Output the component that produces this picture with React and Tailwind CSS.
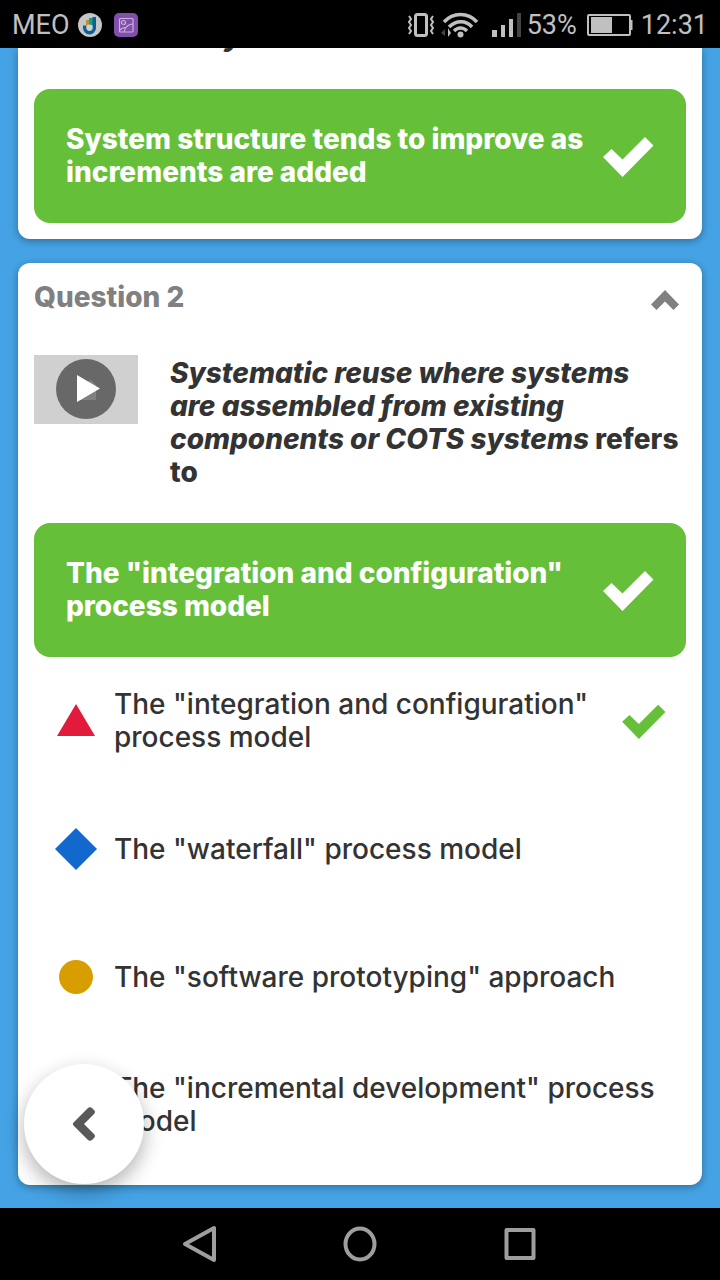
const OPTIONS = [
  { shape: 'triangle', text: 'The "integration and configuration" process model', correct: true },
  { shape: 'diamond', text: 'The "waterfall" process model' },
  { shape: 'circle', text: 'The "software prototyping" approach' },
  { shape: 'square', text: 'The "incremental development" process model' },
];

function Shape({ kind }) {
  return (
    <svg viewBox="0 0 42 42" className="h-[42px] w-[42px] shrink-0" aria-hidden="true">
      {kind === 'triangle' && <path d="M21 4L40 36H2Z" fill="#e21b3c" />}
      {kind === 'diamond' && <path d="M21 0L42 21L21 42L0 21Z" fill="#1368ce" />}
      {kind === 'circle' && <circle cx="21" cy="21" r="17" fill="#d89e00" />}
      {kind === 'square' && <path d="M5 5H37V37H5Z" fill="#66bf39" />}
    </svg>
  );
}

function Check({ className }) {
  return (
    <svg viewBox="0 0 51 42" className={className} fill="currentColor" aria-hidden="true">
      <path d="M0 22L8.500 14L19.500 24.500L42 2L50.500 10.500L19.500 42Z" />
    </svg>
  );
}

function Answer({ children }) {
  return (
    <div className="flex items-center rounded-2xl bg-[#66bf39] py-[34px] pr-8 pl-8 text-white">
      <p className="min-w-0 flex-1 font-extrabold">{children}</p>
      <Check className="h-[42px] w-[51px] shrink-0" />
    </div>
  );
}

function StatusBar() {
  return (
    <header className="flex h-12 items-center justify-between bg-black px-3 pt-0.5 font-[Roboto,sans-serif] text-[27px] leading-8 text-[#c0c0c0]">
      <div className="flex items-center">
        <span>MEO</span>
        <svg viewBox="0 0 24 24" className="ml-2 h-6 w-6" aria-hidden="true">
          <circle cx="12" cy="12" r="12" fill="#c6c6c6" />
          <path d="M8 7H11.500V12H8Z" fill="#b8952c" />
          <path d="M11 5H15V12H11Z" fill="#16a085" />
          <path d="M14.500 4H18V15A6.500 6.500 0 0 1 5 15V12.500H8.500V15A3 3 0 0 0 14.500 15Z" fill="#0a6199" />
          <circle cx="11.500" cy="14.500" r="3" fill="#d0d0d0" />
        </svg>
        <svg viewBox="0 0 24 24" className="ml-3 h-6 w-6" fill="none" stroke="#c8b5d8" strokeWidth="1.200" aria-hidden="true">
          <rect width="24" height="24" rx="5" fill="#824fae" stroke="none" />
          <rect x="5.500" y="5.500" width="13.500" height="13.500" rx="1" />
          <circle cx="9.500" cy="9.500" r="2" />
          <path d="M10 19C11 15 14 11 19 11M6 17C8 15 10 14 12 15" />
        </svg>
      </div>
      <div className="flex items-center">
        <svg viewBox="0 0 28 26" className="h-[26px] w-7" fill="none" stroke="#c0c0c0" aria-hidden="true">
          <rect x="8.500" y="2.500" width="11" height="21" rx="2" strokeWidth="3" />
          <path d="M2 4L4 7L2 10L4 13L2 16L4 19L2 22M26 4L24 7L26 10L24 13L26 16L24 19L26 22" strokeWidth="2" />
        </svg>
        <svg viewBox="0 0 38 26" className="ml-1.5 h-[26px] w-[38px]" fill="none" stroke="#c0c0c0" strokeWidth="3.500" aria-hidden="true">
          <path d="M3 10C12 0 27 0 36 10M8 15C15 8 25 8 31 15M13 19C17 15 22 15 26 19" />
          <circle cx="19.500" cy="22.500" r="3" fill="#c0c0c0" stroke="none" />
          <path d="M0 21L4 17V24Z" fill="#444" stroke="none" />
          <path d="M7 16L10 21L7 25Z" fill="#c0c0c0" stroke="none" />
        </svg>
        <svg viewBox="0 0 30 26" className="ml-3 h-[26px] w-[30px]" aria-hidden="true">
          <path d="M1 18H6V25H1ZM10 13H14V25H10ZM18 7H22V25H18Z" fill="#c0c0c0" />
          <path d="M26 1H30V25H26Z" fill="#444" />
        </svg>
        <span className="ml-1.5">53%</span>
        <svg viewBox="0 0 46 24" className="ml-2.5 h-6 w-[46px]" aria-hidden="true">
          <rect x="1" y="2" width="42" height="20" rx="1" fill="none" stroke="#c0c0c0" strokeWidth="2" />
          <path d="M4 4H25V20H4ZM43 7H45.500V17H43Z" fill="#c0c0c0" />
        </svg>
        <span className="ml-2">12:31</span>
      </div>
    </header>
  );
}

function NavBar() {
  return (
    <nav className="flex h-[72px] items-center justify-center gap-[120px] bg-black text-[#9e9e9e]">
      <button type="button" aria-label="Back" className="h-10 w-10">
        <svg viewBox="0 0 40 40" className="h-10 w-10" fill="none" stroke="currentColor" strokeWidth="4" strokeLinejoin="round">
          <path d="M34 4V36L5 20Z" />
        </svg>
      </button>
      <button type="button" aria-label="Home" className="h-10 w-10">
        <svg viewBox="0 0 40 40" className="h-10 w-10" fill="none" stroke="currentColor" strokeWidth="4">
          <ellipse cx="20" cy="20" rx="14.500" ry="15.500" />
        </svg>
      </button>
      <button type="button" aria-label="Recent apps" className="h-10 w-10">
        <svg viewBox="0 0 40 40" className="h-10 w-10" fill="none" stroke="currentColor" strokeWidth="4" strokeLinejoin="round">
          <path d="M6.500 6H33.500V34H6.500Z" />
        </svg>
      </button>
    </nav>
  );
}

export default function App() {
  return (
    <div className="flex min-h-screen flex-col bg-[#45a3e5]">
      <StatusBar />
      <main className="relative flex flex-1 flex-col gap-6 px-[18px] pb-[23px] font-[Inter,sans-serif] text-[28px] leading-[33px] font-medium text-[#333]">
        <section className="rounded-b-xl bg-white px-4 pb-4 shadow-[0_2px_8px_rgba(0,0,0,0.35)]">
          <div className="h-[41px] overflow-hidden pl-[190px]">
            <p className="-mt-7 font-extrabold italic">y</p>
          </div>
          <Answer>System structure tends to improve as increments are added</Answer>
        </section>

        <section className="rounded-xl bg-white px-4 pt-[18px] pb-4 shadow-[0_2px_8px_rgba(0,0,0,0.35)]">
          <div className="flex items-center justify-between pr-[7px] text-[#808080]">
            <h2 className="font-extrabold">Question 2</h2>
            <button type="button" aria-label="Collapse question" className="flex h-6 w-7 items-end">
              <svg viewBox="0 0 28 20" className="h-5 w-7" fill="currentColor">
                <path d="M14 0L28 14.500L22.500 20L14 11.500L5.500 20L0 14.500Z" />
              </svg>
            </button>
          </div>

          <div className="mt-[41px] mb-[34px] flex gap-8">
            <button type="button" aria-label="Play media" className="h-[69px] w-[104px] shrink-0 bg-[#d0d0d0]">
              <svg viewBox="0 0 104 69" className="h-full w-full">
                <circle cx="52" cy="34" r="30" fill="#686868" />
                <path d="M43 32L57 25L62 30V45H43Z" fill="#808080" />
                <path d="M43 20L66 33.500L43 47Z" fill="#fff" />
              </svg>
            </button>
            <p className="min-w-0 flex-1 pt-0.5 font-extrabold">
              <em>
                Systematic reuse where systems
                <br />
                are assembled from existing
                <br />
                components or COTS systems
              </em>{' '}
              refers
              <br />
              to
            </p>
          </div>

          <Answer>The "integration and configuration" process model</Answer>

          <ul>
            {OPTIONS.map((option) => (
              <li key={option.shape} className="flex h-32 items-center pr-5 pl-[21px]">
                <Shape kind={option.shape} />
                <p className="ml-[17px] min-w-0 flex-1">{option.text}</p>
                {option.correct && <Check className="h-9 w-11 shrink-0 text-[#66bf39]" />}
              </li>
            ))}
          </ul>
        </section>

        <button
          type="button"
          aria-label="Go back"
          className="absolute bottom-6 left-6 flex h-[120px] w-[120px] items-center justify-center rounded-full bg-white shadow-[0_8px_20px_rgba(0,0,0,0.3)]"
        >
          <svg viewBox="0 0 24 36" className="h-9 w-6" fill="#595959" aria-hidden="true">
            <path d="M1.500 16.500L15.500 2.500Q18 0 20.500 2.500L22 4Q24 6 22 8L12 18L22 28Q24 30 22 32L20.500 33.500Q18 36 15.500 33.500L1.500 19.500Q0 18 1.500 16.500Z" />
          </svg>
        </button>
      </main>
      <NavBar />
    </div>
  );
}
